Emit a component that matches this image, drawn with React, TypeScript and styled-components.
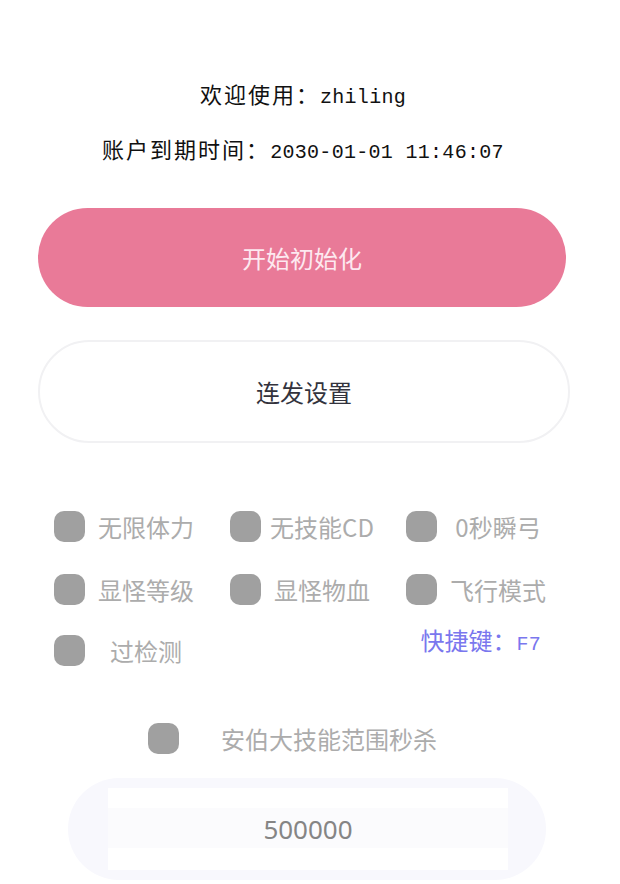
import React, { useState } from "react";
import styled, { createGlobalStyle } from "styled-components";

const GlobalStyle = createGlobalStyle`
  html, body {
    margin: 0;
    padding: 0;
    background: #ffffff;
  }
  body {
    font-family: "Noto Sans CJK SC", "Noto Sans", sans-serif;
  }
`;

const Page = styled.div`
  width: 620px;
  height: 884px;
  overflow: hidden;
  display: flex;
  flex-direction: column;
  padding-top: 76px;
  box-sizing: border-box;
`;

const InfoLine = styled.div<{ $gap?: number }>`
  display: flex;
  justify-content: center;
  align-items: baseline;
  height: 34px;
  margin-top: ${(p) => p.$gap ?? 0}px;
  padding-right: 14px;
  font-size: 22px;
  letter-spacing: 2px;
  color: #111;
  line-height: 34px;
`;

const Mono = styled.span`
  font-family: "Liberation Mono", "DejaVu Sans Mono", monospace;
  font-size: 20px;
  letter-spacing: 0.3px;
`;

const PillButton = styled.button<{ $primary?: boolean; $top: number }>`
  display: flex;
  align-items: center;
  justify-content: center;
  margin: ${(p) => p.$top}px 0 0 38px;
  width: ${(p) => (p.$primary ? 528 : 532)}px;
  height: ${(p) => (p.$primary ? 99 : 103)}px;
  border-radius: 52px;
  border: ${(p) => (p.$primary ? "none" : "2px solid #f1f1f3")};
  background: ${(p) => (p.$primary ? "#e97a98" : "#ffffff")};
  color: ${(p) => (p.$primary ? "#fde9f0" : "#33333d")};
  font-family: inherit;
  font-size: 24px;
  padding: 0;
  box-sizing: border-box;
  cursor: pointer;
`;

const Options = styled.div`
  display: grid;
  grid-template-columns: repeat(3, 176px);
  grid-template-rows: 65px 61px 60px;
  margin: 51px 0 0 54px;
`;

const Option = styled.label`
  display: flex;
  align-items: center;
  cursor: pointer;
`;

const Box = styled.span<{ $on?: boolean }>`
  flex: none;
  width: 31px;
  height: 31px;
  border-radius: 10px;
  background: ${(p) => (p.$on ? "#e97a98" : "#a0a0a0")};
`;

const OptionText = styled.span<{ $width?: number }>`
  width: ${(p) => p.$width ?? 122}px;
  text-align: center;
  font-size: 24px;
  color: #acacac;
  white-space: nowrap;
`;

const Hotkey = styled.div`
  display: flex;
  align-items: baseline;
  justify-content: flex-end;
  padding: 2px 41px 0 0;
  font-size: 24px;
  color: #7a77ee;
  white-space: nowrap;
`;

const HotkeyMono = styled(Mono)`
  color: #7a77ee;
`;

const WideRow = styled.div`
  display: flex;
  margin: 38px 0 0 148px;
  height: 40px;
`;

const InputPill = styled.div`
  margin: 20px 0 0 68px;
  width: 478px;
  height: 102px;
  border-radius: 51px;
  background: #f8f8fd;
  display: flex;
  align-items: center;
  justify-content: center;
`;

const InputField = styled.input`
  width: 400px;
  height: 82px;
  box-sizing: border-box;
  border: none;
  outline: none;
  padding: 20px 0;
  background: linear-gradient(
    #ffffff 0 20px,
    #fbfbfd 20px 60px,
    #ffffff 60px
  );
  text-align: center;
  font-family: "Noto Sans", sans-serif;
  font-size: 26px;
  color: #858585;
  margin-left: 2px;
`;

const options = [
  "无限体力",
  "无技能CD",
  "0秒瞬弓",
  "显怪等级",
  "显怪物血",
  "飞行模式",
  "过检测",
];

export default function App() {
  const [checked, setChecked] = useState<Record<string, boolean>>({});
  const [value, setValue] = useState("500000");

  const toggle = (k: string) => setChecked((c) => ({ ...c, [k]: !c[k] }));

  return (
    <>
      <GlobalStyle />
      <Page>
        <InfoLine>
          欢迎使用：<Mono>zhiling</Mono>
        </InfoLine>
        <InfoLine $gap={21}>
          账户到期时间：<Mono>2030-01-01 11:46:07</Mono>
        </InfoLine>

        <PillButton $primary $top={43}>
          开始初始化
        </PillButton>
        <PillButton $top={33}>连发设置</PillButton>

        <Options>
          {options.map((label) => (
            <Option key={label} onClick={() => toggle(label)}>
              <Box $on={checked[label]} />
              <OptionText>{label}</OptionText>
            </Option>
          ))}
          <div />
          <Hotkey>
            快捷键：<HotkeyMono>F7</HotkeyMono>
          </Hotkey>
        </Options>

        <WideRow>
          <Option onClick={() => toggle("amber")}>
            <Box $on={checked["amber"]} />
            <OptionText $width={300}>安伯大技能范围秒杀</OptionText>
          </Option>
        </WideRow>

        <InputPill>
          <InputField
            value={value}
            onChange={(e) => setValue(e.target.value)}
          />
        </InputPill>
      </Page>
    </>
  );
}
